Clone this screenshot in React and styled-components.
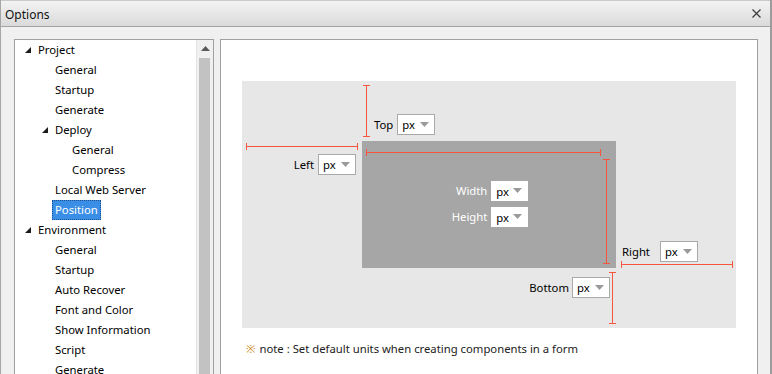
import React from 'react';
import styled, { createGlobalStyle } from 'styled-components';

const GlobalStyle = createGlobalStyle`
    html, body {
        margin: 0;
        padding: 0;
        background: #f0f0f0;
    }
    body {
        font-family: "Noto Sans", "Open Sans", sans-serif;
        font-size: 11.3px;
        color: #000;
    }
`

const RED = '#f8553f';

const Window = styled.div`
    width: 772px;
    height: 374px;
    display: flex;
    flex-direction: column;
    box-sizing: border-box;
    border-left: 1px solid #a6a6a6;
    border-right: 2px solid #9c9c9c;
    background: #f0f0f0;
    overflow: hidden;
`

const TitleBar = styled.div`
    height: 27px;
    flex: none;
    display: flex;
    align-items: center;
    justify-content: space-between;
    padding: 0 9px 0 4px;
    background: linear-gradient(#f3f3f3, #dadada);
    border-bottom: 1px solid #a4a4a4;
    border-top: 1px solid #c8c8c8;
    box-sizing: border-box;
    .title {
        font-size: 12px;
        color: #111;
        padding-top: 1px;
    }
`

const Body = styled.div`
    flex: 1;
    display: flex;
    gap: 6px;
    padding: 12px 12px 0 13px;
    min-height: 0;
`

const TreePanel = styled.div`
    width: 200px;
    flex: none;
    display: flex;
    box-sizing: border-box;
    border: 1px solid #a0a0a0;
    border-bottom: none;
    background: #fff;
`

const TreeList = styled.ul`
    flex: 1;
    margin: 0;
    padding: 0;
    list-style: none;
`

const TreeRow = styled.li`
    height: 20px;
    display: flex;
    align-items: center;
    padding-left: ${p => 10 + p.$level * 17}px;
`

const Toggle = styled.span`
    width: 10px;
    flex: none;
    display: flex;
    align-items: center;
    svg { display: block; margin-top: -1px; }
`

const TreeLabel = styled.span`
    padding: 1px 2px 2px;
    line-height: 15px;
    white-space: nowrap;
    border: 1px dotted ${p => p.$selected ? '#1d4f8f' : 'transparent'};
    background: ${p => p.$selected ? '#3b8ee6' : 'transparent'};
    color: ${p => p.$selected ? '#fff' : '#000'};
`

const ScrollBar = styled.div`
    width: 17px;
    flex: none;
    display: flex;
    flex-direction: column;
    background: #f0f0f0;
    border-left: 1px solid #e4e4e4;
    box-sizing: border-box;
    .arrow {
        height: 17px;
        display: flex;
        align-items: center;
        justify-content: center;
    }
    .thumb {
        flex: 1;
        margin: 1px 3px 0 2px;
        background: #c2c2c2;
    }
`

const ContentPanel = styled.div`
    flex: 1;
    box-sizing: border-box;
    border: 1px solid #a0a0a0;
    border-bottom: none;
    background: #fff;
    padding: 41px 21px 0 21px;
`

const Diagram = styled.div`
    display: grid;
    grid-template-columns: 120px 254px 120px;
    grid-template-rows: 60px 127px 60px;
    background: #e7e7e7;
`

const TopCell = styled.div`
    grid-column: 2;
    grid-row: 1;
    display: flex;
    padding: 4px 0 4px 1px;
`

const LeftCell = styled.div`
    grid-column: 1;
    grid-row: 2;
    display: flex;
    flex-direction: column;
    padding: 2px 4px 0 4px;
`

const CenterCell = styled.div`
    grid-column: 2;
    grid-row: 2;
    background: #a6a6a6;
    display: grid;
    grid-template-columns: 237px 7px;
    grid-template-rows: 7px 1fr;
    padding: 8px 6px 4px 4px;
`

const RightCell = styled.div`
    grid-column: 3;
    grid-row: 2;
    display: flex;
    flex-direction: column;
    justify-content: flex-end;
    padding: 0 3px 0 5px;
`

const BottomCell = styled.div`
    grid-column: 2;
    grid-row: 3;
    display: flex;
    justify-content: flex-end;
    padding: 4px 0 4px 0;
`

/* measurement lines with end caps */
const HRule = styled.div`
    height: 7px;
    flex: none;
    display: flex;
    align-items: center;
    width: ${p => p.$width ? `${p.$width}px` : 'auto'};
    .cap { width: 1px; height: 7px; background: ${RED}; flex: none; }
    .bar { flex: 1; height: 1px; background: ${RED}; }
`

const VRule = styled.div`
    width: 7px;
    flex: none;
    display: flex;
    flex-direction: column;
    align-items: center;
    .cap { height: 1px; width: 7px; background: ${RED}; flex: none; }
    .bar { flex: 1; width: 1px; background: ${RED}; }
`

function HLine({ width, style }) {
    return (
        <HRule $width={width} style={style}>
            <span className="cap" /><span className="bar" /><span className="cap" />
        </HRule>
    );
}

function VLine({ style }) {
    return (
        <VRule style={style}>
            <span className="cap" /><span className="bar" /><span className="cap" />
        </VRule>
    );
}

const Field = styled.div`
    display: flex;
    align-items: center;
    gap: ${p => p.$gap ?? 4}px;
    line-height: 16px;
    align-self: ${p => p.$align ?? 'auto'};
`

const SelectBox = styled.div`
    width: ${p => p.$width ?? 38}px;
    height: ${p => p.$height ?? 21}px;
    box-sizing: border-box;
    border: 1px solid ${p => p.$plain ? '#fff' : '#a9a9a9'};
    background: #fff;
    display: flex;
    align-items: center;
    justify-content: space-between;
    padding: 1px 5px 0 4px;
    color: #000;
    svg { display: block; margin-top: -1px; }
`

const InnerFields = styled.div`
    grid-column: 1 / 3;
    grid-row: 1 / 3;
    place-self: center;
    display: grid;
    grid-template-columns: auto auto;
    column-gap: 4px;
    row-gap: 6px;
    align-items: center;
    margin: 0 0 6px 4px;
    .lbl {
        color: #fff;
        text-align: right;
    }
`

const Note = styled.div`
    margin-top: 13px;
    padding-left: 4px;
    color: #222;
    .mark {
        color: #cf8a2c;
        margin-right: 4px;
    }
`

const Triangle = () => (
    <svg width="6" height="6" viewBox="0 0 6 6"><polygon points="6,0 6,6 0,6" fill="#1a1a1a" /></svg>
);

const Caret = () => (
    <svg width="9" height="5" viewBox="0 0 9 5"><polygon points="0,0 9,0 4.5,5" fill="#9a9a9a" /></svg>
);

function Select({ plain, width, height }) {
    return (
        <SelectBox $plain={plain} $width={width} $height={height}>
            <span>px</span>
            <Caret />
        </SelectBox>
    );
}

const treeItems = [
    { label: 'Project', level: 0, open: true },
    { label: 'General', level: 1 },
    { label: 'Startup', level: 1 },
    { label: 'Generate', level: 1 },
    { label: 'Deploy', level: 1, open: true },
    { label: 'General', level: 2 },
    { label: 'Compress', level: 2 },
    { label: 'Local Web Server', level: 1 },
    { label: 'Position', level: 1, selected: true },
    { label: 'Environment', level: 0, open: true },
    { label: 'General', level: 1 },
    { label: 'Startup', level: 1 },
    { label: 'Auto Recover', level: 1 },
    { label: 'Font and Color', level: 1 },
    { label: 'Show Information', level: 1 },
    { label: 'Script', level: 1 },
    { label: 'Generate', level: 1 },
];

export default function App() {
    return (
        <>
            <GlobalStyle />
            <Window>
                <TitleBar>
                    <span className="title">Options</span>
                    <svg width="9" height="9" viewBox="0 0 9 9">
                        <path d="M0.5 0.5 L8.5 8.5 M8.5 0.5 L0.5 8.5" stroke="#3c3c3c" strokeWidth="1.2" />
                    </svg>
                </TitleBar>
                <Body>
                    <TreePanel>
                        <TreeList>
                            {treeItems.map((item, i) => (
                                <TreeRow key={i} $level={item.level}>
                                    <Toggle>{item.open && <Triangle />}</Toggle>
                                    <TreeLabel $selected={item.selected}>{item.label}</TreeLabel>
                                </TreeRow>
                            ))}
                        </TreeList>
                        <ScrollBar>
                            <div className="arrow">
                                <svg width="9" height="5" viewBox="0 0 9 5"><polygon points="0,5 9,5 4.5,0" fill="#5a5a5a" /></svg>
                            </div>
                            <div className="thumb" />
                        </ScrollBar>
                    </TreePanel>
                    <ContentPanel>
                        <Diagram>
                            <TopCell>
                                <VLine />
                                <Field $align="flex-end" style={{ marginLeft: 4, marginBottom: 2 }}>
                                    Top <Select />
                                </Field>
                            </TopCell>
                            <LeftCell>
                                <HLine />
                                <Field $align="flex-end" style={{ marginTop: 4, marginRight: 2 }}>
                                    Left <Select />
                                </Field>
                            </LeftCell>
                            <CenterCell>
                                <HLine width={235} style={{ gridColumn: 1, gridRow: 1 }} />
                                <VLine style={{ gridColumn: 2, gridRow: 2, marginTop: 3 }} />
                                <InnerFields>
                                    <span className="lbl">Width</span>
                                    <Select plain width={37} height={20} />
                                    <span className="lbl">Height</span>
                                    <Select plain width={37} height={20} />
                                </InnerFields>
                            </CenterCell>
                            <RightCell>
                                <Field $gap={10} style={{ paddingLeft: 1, marginBottom: -1 }}>
                                    Right <Select />
                                </Field>
                                <HLine />
                            </RightCell>
                            <BottomCell>
                                <Field $gap={3} $align="flex-start" style={{ marginTop: 5, marginRight: -1 }}>
                                    Bottom <Select />
                                </Field>
                                <VLine />
                            </BottomCell>
                        </Diagram>
                        <Note>
                            <span className="mark">※</span>note : Set default units when creating components in a form
                        </Note>
                    </ContentPanel>
                </Body>
            </Window>
        </>
    );
}
